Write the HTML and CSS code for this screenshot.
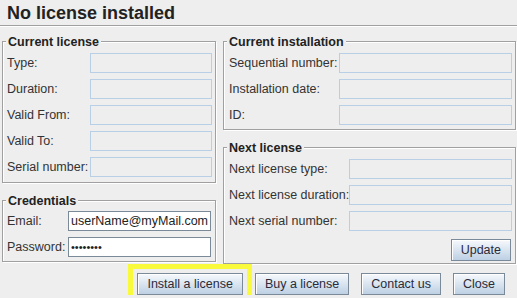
FILE: index.html
```html
<!DOCTYPE html>
<html lang="en">
<head>
    <meta charset="UTF-8">
    <meta name="viewport" content="width=device-width, initial-scale=1.0">
    <title>No license installed</title>
    <link rel="stylesheet" href="styles.css">
</head>
<body>
    <div class="header">
        <h1 class="title">No license installed</h1>
    </div>

    <div class="panels">
        <div class="col col-left">
            <div class="group">
                <div class="group-title">Current license</div>
                <div class="rows rows-license">
                    <label>Type:</label><input class="field" readonly>
                    <label>Duration:</label><input class="field" readonly>
                    <label>Valid From:</label><input class="field" readonly>
                    <label>Valid To:</label><input class="field" readonly>
                    <label>Serial number:</label><input class="field" readonly>
                </div>
            </div>

            <div class="group group-credentials">
                <div class="group-title">Credentials</div>
                <div class="rows rows-credentials">
                    <label>Email:</label><input class="field field-edit" type="text" value="userName@myMail.com">
                    <label>Password:</label><input class="field field-edit field-password" type="password" value="password">
                </div>
            </div>
        </div>

        <div class="col col-right">
            <div class="group">
                <div class="group-title">Current installation</div>
                <div class="rows rows-install">
                    <label>Sequential number:</label><input class="field" readonly>
                    <label>Installation date:</label><input class="field" readonly>
                    <label>ID:</label><input class="field" readonly>
                </div>
            </div>

            <div class="group group-next">
                <div class="group-title">Next license</div>
                <div class="rows rows-next">
                    <label>Next license type:</label><input class="field" readonly>
                    <label>Next license duration:</label><input class="field" readonly>
                    <label>Next serial number:</label><input class="field" readonly>
                </div>
                <div class="update-row">
                    <button class="btn">Update</button>
                </div>
            </div>
        </div>
    </div>

    <div class="actions">
        <button class="btn btn-install">Install a license</button>
        <button class="btn">Buy a license</button>
        <button class="btn">Contact us</button>
        <button class="btn">Close</button>
    </div>
</body>
</html>
```

FILE: styles.css
```css
body {
    margin: 0;
    background-color: #eeeeee;
    font-family: 'Liberation Sans', Arial, sans-serif;
    font-size: 12.5px;
    color: #333;
}
.header {
    height: 25px;
    padding-left: 7px;
    border-bottom: 1px solid #a0a0a0;
    box-shadow: 0 1px 0 #fff;
}
.title {
    margin: 0;
    padding-top: 3px;
    font-size: 18px;
    line-height: 21px;
    font-weight: bold;
    color: #222;
}
.panels {
    display: flex;
    align-items: flex-start;
    gap: 7px;
    padding: 15px 1px 0 2px;
}
.col-left {
    width: 214px;
    flex: none;
}
.col-right {
    flex: 1;
}
.group {
    border: 1px solid #a0a0a0;
    box-shadow: 1px 1px 0 #fff, inset 1px 1px 0 #fff;
}
.group-credentials,
.group-next {
    margin-top: 17px;
}
.group-title {
    width: fit-content;
    margin: -7px 0 0 3px;
    padding: 0 2px;
    line-height: 14px;
    font-weight: bold;
    color: #222;
    background-color: #eeeeee;
}
.rows {
    display: grid;
    grid-auto-rows: 20px;
    row-gap: 6px;
    align-items: center;
}
.rows label {
    white-space: nowrap;
}
.rows-license {
    grid-template-columns: 83px 1fr;
    padding: 4px 3px 5px 4px;
}
.rows-credentials {
    grid-template-columns: 61px 1fr;
    padding: 3px 4px 4px 4px;
}
.rows-install {
    grid-template-columns: 110px 1fr;
    padding: 4px 3px 4px 5px;
}
.rows-next {
    grid-template-columns: 120px 1fr;
    padding: 4px 3px 0 5px;
}
.field {
    box-sizing: border-box;
    width: 100%;
    height: 20px;
    margin: 0;
    padding: 0 2px;
    border: 1px solid #b8cfe5;
    background-color: #eeeeee;
    font: inherit;
    color: #333;
    outline: none;
}
.field-edit {
    border-color: #7a8a99;
    background-color: #fff;
    color: #222;
}
.field-password {
    font-size: 11px;
}
.update-row {
    display: flex;
    justify-content: flex-end;
    padding: 8px 4px 2px 0;
}
.actions {
    display: flex;
    justify-content: flex-end;
    gap: 12px;
    padding: 9px 12px 0 0;
}
.btn {
    height: 22px;
    margin: 0;
    padding: 0 9px;
    border: 1px solid #7a8a99;
    border-radius: 0;
    background: linear-gradient(#f6f9fc, #bdd0e4);
    box-shadow: inset 1px 1px 0 #fff;
    font: inherit;
    color: #2b2b3a;
}
.btn-install {
    outline: 5px solid #fafa3c;
    outline-offset: 4px;
}
```
